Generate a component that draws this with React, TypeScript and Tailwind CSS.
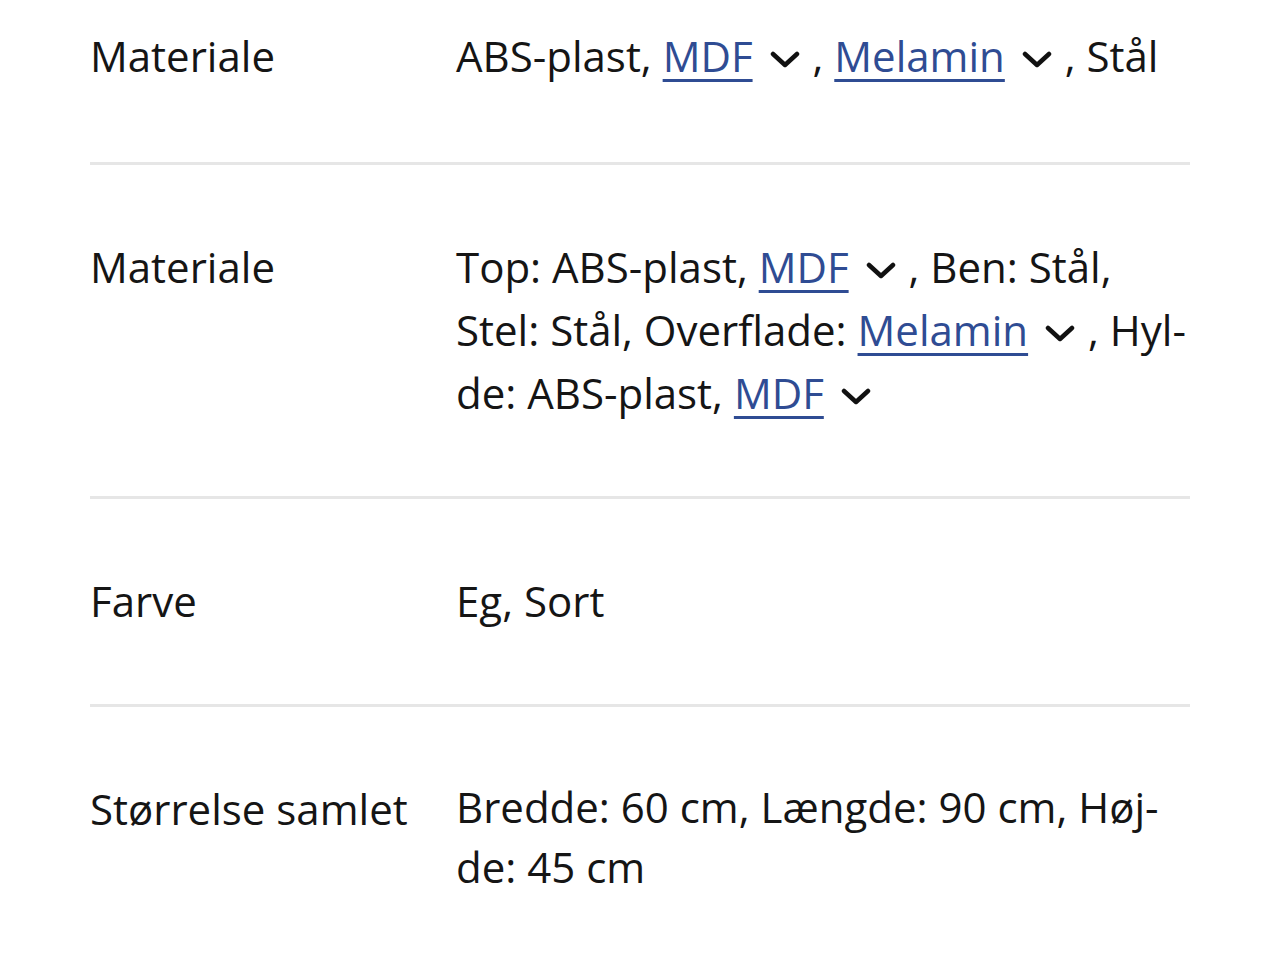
const Chevron = () => (
  <svg
    width="30"
    height="18"
    viewBox="0 0 30 18"
    className="inline-block align-[4px] ml-[17px] mr-[2px]"
    fill="none"
    stroke="#111111"
    strokeWidth="4.5"
    strokeLinecap="round"
    strokeLinejoin="round"
  >
    <polyline points="3,4 15,15 27,4" />
  </svg>
);

const Link = ({ children }: { children: React.ReactNode }) => (
  <a
    href="#"
    className="text-[#2f4c93] underline decoration-[3px] underline-offset-[7px]"
  >
    {children}
  </a>
);

const Row = ({
  label,
  children,
  first,
  last,
}: {
  label: string;
  children: React.ReactNode;
  first?: boolean;
  last?: boolean;
}) => (
  <div
    className={`flex ${first ? "pt-[24px] pb-[75px]" : "pt-[70px] pb-[72px]"} ${
      last ? "" : "border-b-[3px] border-[#e6e6e6]"
    }`}
  >
    <div className="w-[366px] shrink-0">{label}</div>
    <div className="flex-1">{children}</div>
  </div>
);

export default function App() {
  return (
    <div className="min-h-[960px] bg-white">
      <div
        className="ml-[90px] w-[1100px] text-[42px] leading-[63px] text-[#151515]"
        style={{ fontFamily: '"Open Sans", "Noto Sans", sans-serif' }}
      >
        <Row label="Materiale" first>
          ABS-plast, <Link>MDF</Link>
          <Chevron /> , <Link>Melamin</Link>
          <Chevron /> , Stål
        </Row>

        <Row label="Materiale">
          <div>
            Top: ABS-plast, <Link>MDF</Link>
            <Chevron /> , Ben: Stål,
          </div>
          <div>
            Stel: Stål, Overflade: <Link>Melamin</Link>
            <Chevron /> , Hyl-
          </div>
          <div>
            de: ABS-plast, <Link>MDF</Link>
            <Chevron />
          </div>
        </Row>

        <Row label="Farve">Eg, Sort</Row>

        <Row label="Størrelse samlet" last>
          <div className="leading-[60px]">
            <div>Bredde: 60 cm, Længde: 90 cm, Høj-</div>
            <div>de: 45 cm</div>
          </div>
        </Row>
      </div>
    </div>
  );
}
